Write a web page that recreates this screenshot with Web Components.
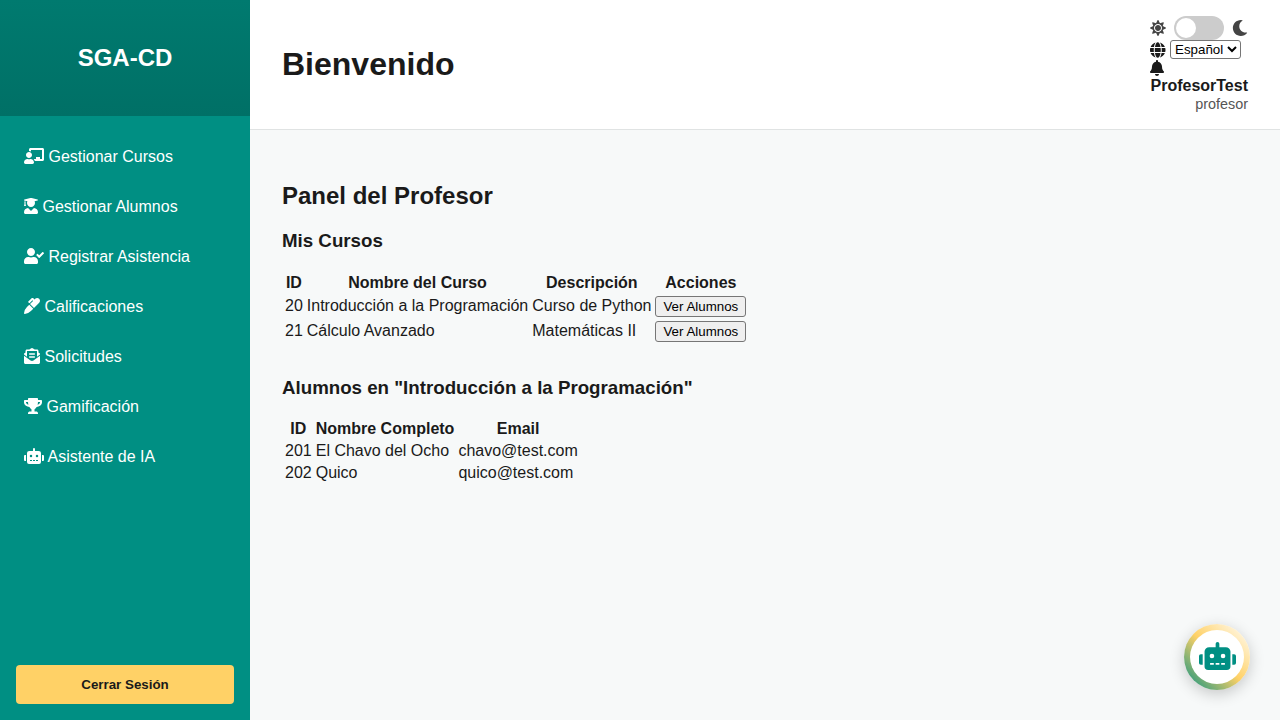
<!DOCTYPE html>
<html lang="es"><head><meta charset="utf-8"><title>SGA-CD</title>
<style>
html,body{margin:0;height:100%;overflow:hidden}
body{font-family:"Liberation Sans",Arial,sans-serif;font-size:16px;color:#1a1a1a;background:#f7f9f9}
</style></head><body>
<app-shell>
  <side-bar slot="side">
    <nav-item icon="chalkboard">Gestionar Cursos</nav-item>
    <nav-item icon="graduate">Gestionar Alumnos</nav-item>
    <nav-item icon="usercheck">Registrar Asistencia</nav-item>
    <nav-item icon="pen">Calificaciones</nav-item>
    <nav-item icon="envelope">Solicitudes</nav-item>
    <nav-item icon="trophy">Gamificación</nav-item>
    <nav-item icon="robot">Asistente de IA</nav-item>
  </side-bar>
  <top-bar slot="top"></top-bar>
  <panel-view></panel-view>
</app-shell>
<chat-fab></chat-fab>
<script>
const I={
chalkboard:[640,"M208 352c-2.39 0-4.78.35-7.06 1.09C187.98 357.3 174.35 360 160 360c-14.35 0-27.98-2.7-40.95-6.91-2.28-.74-4.66-1.09-7.05-1.09C49.94 352-.33 402.48 0 464.62.14 490.88 21.73 512 48 512h224c26.27 0 47.86-21.12 48-47.38.33-62.14-49.94-112.62-112-112.62zm-48-32c53.02 0 96-42.98 96-96s-42.98-96-96-96-96 42.98-96 96 42.98 96 96 96zM592 0H208c-26.47 0-48 22.25-48 49.59V96c23.42 0 45.1 6.78 64 17.8V64h352v288h-64v-64H384v64h-76.24c19.1 16.69 33.12 38.73 39.69 64H592c26.47 0 48-22.25 48-49.59V49.59C640 22.25 618.47 0 592 0z"],
graduate:[448,"M319.4 320.6L224 416l-95.4-95.4C57.1 323.7 0 382.2 0 454.4v9.6c0 26.5 21.5 48 48 48h352c26.5 0 48-21.5 48-48v-9.6c0-72.2-57.1-130.7-128.6-133.8zM13.6 79.8l6.4 1.5v58.4c-7 4.2-12 11.5-12 20.3 0 8.4 4.6 15.4 11.1 19.7L3.5 242c-1.7 6.9 2.1 14 7.6 14h41.8c5.5 0 9.3-7.1 7.6-14l-15.6-62.3C51.4 175.4 56 168.4 56 160c0-8.8-5-16.1-12-20.3V87.1l66 15.9c-8.6 17.2-14 36.4-14 57 0 70.7 57.3 128 128 128s128-57.3 128-128c0-20.6-5.3-39.8-14-57l96.3-23.2c18.2-4.4 18.2-27.1 0-31.5l-190.4-46c-13-3.1-26.7-3.1-39.7 0L13.6 48.2c-18.1 4.4-18.1 27.2 0 31.6z"],
usercheck:[640,"M224 256c70.7 0 128-57.3 128-128S294.7 0 224 0 96 57.3 96 128s57.3 128 128 128zm89.6 32h-16.7c-22.2 10.2-46.9 16-72.9 16s-50.6-5.8-72.9-16h-16.7C60.2 288 0 348.2 0 422.4V464c0 26.5 21.5 48 48 48h352c26.5 0 48-21.5 48-48v-41.6c0-74.2-60.2-134.4-134.4-134.4zm323-128.4l-27.8-28.1c-4.6-4.7-12.1-4.7-16.8-.1l-104.8 104-45.5-45.8c-4.6-4.7-12.1-4.7-16.8-.1l-28.1 27.9c-4.7 4.6-4.7 12.1-.1 16.8l81.7 82.3c4.6 4.7 12.1 4.7 16.8.1l141.3-140.2c4.6-4.7 4.7-12.2.1-16.8z"],
pen:[512,"M93.95 290.03A327.038 327.038 0 0 0 .17 485.11l-.03.23c-1.7 15.28 11.21 28.2 26.49 26.51a327.02 327.02 0 0 0 195.34-93.8l75.4-75.4-128.02-128.02-75.4 75.4zM485.49 26.51c-35.35-35.35-92.67-35.35-128.02 0l-21.76 21.76-36.56-36.55c-15.62-15.62-40.95-15.62-56.56 0L138.47 115.84c-6.25 6.25-6.25 16.38 0 22.63l22.62 22.62c6.25 6.25 16.38 6.25 22.63 0l87.15-87.15 19.59 19.59L191.98 192 320 320.02l165.49-165.49c35.35-35.35 35.35-92.66 0-128.02z"],
envelope:[512,"M176 216h160c8.84 0 16-7.16 16-16v-16c0-8.84-7.16-16-16-16H176c-8.84 0-16 7.16-16 16v16c0 8.84 7.16 16 16 16zm-16 80c0 8.84 7.16 16 16 16h160c8.84 0 16-7.16 16-16v-16c0-8.84-7.16-16-16-16H176c-8.84 0-16 7.16-16 16v16zm96 121.13c-16.42 0-32.84-5.06-46.86-15.19L0 250.86V464c0 26.51 21.49 48 48 48h416c26.51 0 48-21.49 48-48V250.86L302.86 401.94c-14.02 10.12-30.44 15.19-46.86 15.19zm237.61-254.18c-8.85-6.94-17.24-13.47-29.61-22.81V96c0-26.51-21.49-48-48-48h-77.55c-3.04-2.2-5.87-4.26-9.04-6.56C312.6 29.17 279.2-.35 256 0c-23.2-.35-56.59 29.17-73.41 41.44-3.17 2.3-6 4.36-9.04 6.56H96c-26.51 0-48 21.49-48 48v44.14c-12.37 9.33-20.76 15.87-29.61 22.81A47.995 47.995 0 0 0 0 200.72v10.65l96 69.35V96h320v184.72l96-69.35v-10.65c0-14.74-6.78-28.67-18.39-37.77z"],
trophy:[576,"M552 64H448V24c0-13.3-10.7-24-24-24H152c-13.3 0-24 10.7-24 24v40H24C10.7 64 0 74.7 0 88v56c0 35.7 22.5 72.4 61.9 100.7 31.5 22.7 69.8 37.1 110 41.7C203.3 338.5 240 360 240 360v72h-48c-35.3 0-64 20.7-64 56v12c0 6.6 5.4 12 12 12h296c6.6 0 12-5.4 12-12v-12c0-35.3-28.7-56-64-56h-48v-72s36.7-21.5 68.1-73.6c40.3-4.6 78.6-19 110-41.7 39.3-28.3 61.9-65 61.9-100.7V88c0-13.3-10.7-24-24-24zM99.3 192.8C74.9 175.2 64 155.6 64 144v-16h64.2c1 32.6 5.8 61.2 12.8 86.2-15.1-5.2-29.2-12.4-41.7-21.4zM512 144c0 16.1-17.7 36.1-35.3 48.8-12.5 9-26.7 16.2-41.8 21.4 7-25 11.8-53.6 12.8-86.2H512v16z"],
robot:[640,"M32,224H64V416H32A31.96166,31.96166,0,0,1,0,384V256A31.96166,31.96166,0,0,1,32,224Zm512-48V448a64.06328,64.06328,0,0,1-64,64H160a64.06328,64.06328,0,0,1-64-64V176a79.974,79.974,0,0,1,80-80H288V32a32,32,0,0,1,64,0V96H464A79.974,79.974,0,0,1,544,176ZM264,256a40,40,0,1,0-40,40A39.997,39.997,0,0,0,264,256Zm-8,128H192v32h64Zm96,0H288v32h64ZM456,256a40,40,0,1,0-40,40A39.997,39.997,0,0,0,456,256Zm-8,128H384v32h64ZM640,256V384a31.96166,31.96166,0,0,1-32,32H576V224h32A31.96166,31.96166,0,0,1,640,256Z"],
sun:[512,"M256 160c-52.9 0-96 43.1-96 96s43.1 96 96 96 96-43.1 96-96-43.1-96-96-96zm246.4 80.5l-94.7-47.3 33.5-100.4c4.5-13.6-8.4-26.5-21.9-21.9l-100.4 33.5-47.4-94.8c-6.4-12.8-24.6-12.8-31 0l-47.3 94.7L92.7 70.8c-13.6-4.5-26.5 8.4-21.9 21.9l33.5 100.4-94.7 47.4c-12.8 6.4-12.8 24.6 0 31l94.7 47.3-33.5 100.5c-4.5 13.6 8.4 26.5 21.9 21.9l100.4-33.5 47.3 94.7c6.4 12.8 24.6 12.8 31 0l47.3-94.7 100.4 33.5c13.6 4.5 26.5-8.4 21.9-21.9l-33.5-100.4 94.7-47.3c13-6.5 13-24.7.2-31.1zm-155.9 106c-49.9 49.9-131.1 49.9-181 0-49.9-49.9-49.9-131.1 0-181 49.9-49.9 131.1-49.9 181 0 49.9 49.9 49.9 131.1 0 181z"],
moon:[512,"M283.211 512c78.962 0 151.079-35.925 198.857-94.792 7.068-8.708-.639-21.43-11.562-19.35-124.203 23.654-238.262-71.576-238.262-196.954 0-72.222 38.662-138.635 101.498-174.394 9.686-5.512 7.25-20.197-3.756-22.23A258.156 258.156 0 0 0 283.211 0c-141.309 0-256 114.511-256 256 0 141.309 114.511 256 256 256z"],
globe:[496,"M336.5 160C322 70.7 287.8 8 248 8s-74 62.7-88.5 152h177zM152 256c0 22.2 1.2 43.5 3.3 64h185.3c2.1-20.5 3.3-41.8 3.3-64s-1.2-43.5-3.3-64H155.3c-2.1 20.5-3.3 41.8-3.3 64zm324.7-96c-28.6-67.9-86.5-120.4-158-141.6 24.4 33.8 41.2 84.7 50 141.6h108zM177.2 18.4C105.8 39.6 47.8 92.1 19.3 160h108c8.7-56.9 25.5-107.8 49.9-141.6zM487.4 192H372.7c2.1 21 3.3 42.5 3.3 64s-1.2 43-3.3 64h114.6c5.5-20.5 8.6-41.8 8.6-64s-3.1-43.5-8.5-64zM120 256c0-21.5 1.2-43 3.3-64H8.6C3.2 212.5 0 233.8 0 256s3.2 43.5 8.6 64h114.6c-2-21-3.2-42.5-3.2-64zm39.5 96c14.5 89.3 48.7 152 88.5 152s74-62.7 88.5-152h-177zm159.3 141.6c71.4-21.2 129.4-73.7 158-141.6h-108c-8.8 56.9-25.6 107.8-50 141.6zM19.3 352c28.6 67.9 86.5 120.4 158 141.6-24.4-33.8-41.2-84.7-50-141.6h-108z"],
bell:[448,"M224 512c35.32 0 63.97-28.65 63.97-64H160.03c0 35.35 28.65 64 63.97 64zm215.39-149.71c-19.32-20.76-55.47-51.99-55.47-154.29 0-77.7-54.48-139.9-127.94-155.16V32c0-17.67-14.32-32-31.98-32s-31.98 14.33-31.98 32v20.84C118.56 68.1 64.08 130.3 64.08 208c0 102.3-36.15 133.53-55.47 154.29-6 6.45-8.66 14.16-8.61 21.71.11 16.4 12.98 32 32.1 32h383.8c19.12 0 32-15.6 32.1-32 .05-7.55-2.61-15.27-8.61-21.71z"]
};
const ico=(n,s=16,c="currentColor")=>`<svg xmlns="http://www.w3.org/2000/svg" viewBox="0 0 ${I[n][0]} 512" width="${s*I[n][0]/512}" height="${s}" fill="${c}" aria-hidden="true"><path d="${I[n][1]}"/></svg>`;
const def=(n,html)=>customElements.define(n,class extends HTMLElement{
  connectedCallback(){ if(this.shadowRoot)return; this.attachShadow({mode:"open"}).innerHTML=typeof html==="function"?html(this):html; }
});
def("app-shell",`<style>:host{display:grid;grid-template-columns:250px 1fr;grid-template-rows:auto 1fr;height:100vh}
::slotted([slot=side]){grid-row:1/3}</style><slot name="side"></slot><slot name="top"></slot><slot></slot>`);
def("side-bar",`<style>:host{display:flex;flex-direction:column;background:#008f83;color:#fff;height:100vh}
.brand{height:116px;display:flex;align-items:center;justify-content:center;font-size:24px;font-weight:700;box-sizing:border-box;background:linear-gradient(#007a6f,#007066)}
nav{flex:1;padding:16px 0 0}
.foot{padding:16px}
button{display:block;width:100%;height:39px;border:0;border-radius:4px;background:#ffd166;color:#1a1a1a;font:700 13.33px "Liberation Sans",Arial,sans-serif;padding:0}
</style><div class="brand">SGA-CD</div><nav><slot></slot></nav><div class="foot"><button>Cerrar Sesión</button></div>`);
def("nav-item",el=>`<style>:host{display:block;height:50px;line-height:50px;padding-left:24px;font-size:16px;color:#fff;white-space:nowrap}
svg{vertical-align:-.125em}</style>${ico(el.getAttribute("icon"))} <slot></slot>`);
def("theme-toggle",`<style>:host{display:block;width:50px;height:24px;border-radius:12px;background:#ccc;position:relative}
i{position:absolute;left:2px;top:2px;width:20px;height:20px;border-radius:50%;background:#fff}</style><i></i>`);
def("top-bar",`<style>:host{display:flex;align-items:center;justify-content:space-between;height:129px;background:#fff;border-bottom:1px solid #e0e3e3;padding:0 32px}
h1{margin:0;font-size:32px;line-height:37px;font-weight:700;color:#1a1a1a}
.box{display:block;text-align:right}
.row{display:flex;align-items:center;text-align:left}
.t{height:24px;gap:8px}
.l{height:19px;gap:4.5px}
.b{height:18px}
select{font:13.33px "Liberation Sans",Arial,sans-serif;height:19px;width:71px;padding:0;color:#000;background:#fff;border:1px solid #767676;border-radius:3px;box-sizing:border-box}
.n{font-weight:700;line-height:18px}
.r{font-size:14.4px;line-height:18px;color:#555}
</style><h1>Bienvenido</h1><div class="box">
<div class="row t">${ico("sun",16,"#444")}<theme-toggle></theme-toggle>${ico("moon",16,"#444")}</div>
<div class="row l">${ico("globe",16,"#1a1a1a")}<select><option>Español</option></select></div>
<div class="row b">${ico("bell",16,"#1a1a1a")}</div>
<div class="n">ProfesorTest</div><div class="r">profesor</div></div>`);
def("data-table",el=>{
  const head=el.getAttribute("head").split("|");
  const rows=el.getAttribute("rows").split(";").map(r=>r.split("|"));
  const cell=c=>c==="@"?`<button>Ver Alumnos</button>`:c;
  return `<style>:host{display:block}
table{border-collapse:separate;border-spacing:2px;font-size:16px}
th,td{padding:1px;text-align:left}th{text-align:center}
button{font:13.33px "Liberation Sans",Arial,sans-serif;color:#000;background:#efefef;border:1px solid #767676;border-radius:3px;padding:1px 7px;box-sizing:border-box;height:21px;display:inline-block}
</style><table><thead><tr>${head.map(h=>`<th>${h}</th>`).join("")}</tr></thead><tbody>${rows.map(r=>`<tr>${r.map(c=>`<td>${cell(c)}</td>`).join("")}</tr>`).join("")}</tbody></table>`;
});
def("panel-view",`<style>:host{display:block;padding:32px}
h2{font-size:24px;margin:19.92px 0;}
h3{font-size:18.72px;margin:18.72px 0}
.s{margin-top:32px}
</style><h2>Panel del Profesor</h2><h3>Mis Cursos</h3>
<data-table head="ID|Nombre del Curso|Descripción|Acciones" rows="20|Introducción a la Programación|Curso de Python|@;21|Cálculo Avanzado|Matemáticas II|@"></data-table>
<div class="s"><h3>Alumnos en "Introducción a la Programación"</h3>
<data-table head="ID|Nombre Completo|Email" rows="201|El Chavo del Ocho|chavo@test.com;202|Quico|quico@test.com"></data-table></div>`);
def("chat-fab",`<style>:host{position:fixed;left:1184px;top:624px;width:66px;height:66px;border-radius:50%;padding:6px;box-sizing:border-box;background:linear-gradient(45deg,#008f83,#ffd166,#fff);box-shadow:0 4px 15px rgba(0,0,0,.2)}
div{width:54px;height:54px;border-radius:50%;background:#fff;display:flex;align-items:center;justify-content:center}
svg{margin-bottom:2px}</style><div><svg xmlns="http://www.w3.org/2000/svg" viewBox="0 0 640 512" width="37" height="28" preserveAspectRatio="none" fill="#008f83" aria-hidden="true"><path d="${I.robot[1]}"/></svg></div>`);
</script>
</body></html>
